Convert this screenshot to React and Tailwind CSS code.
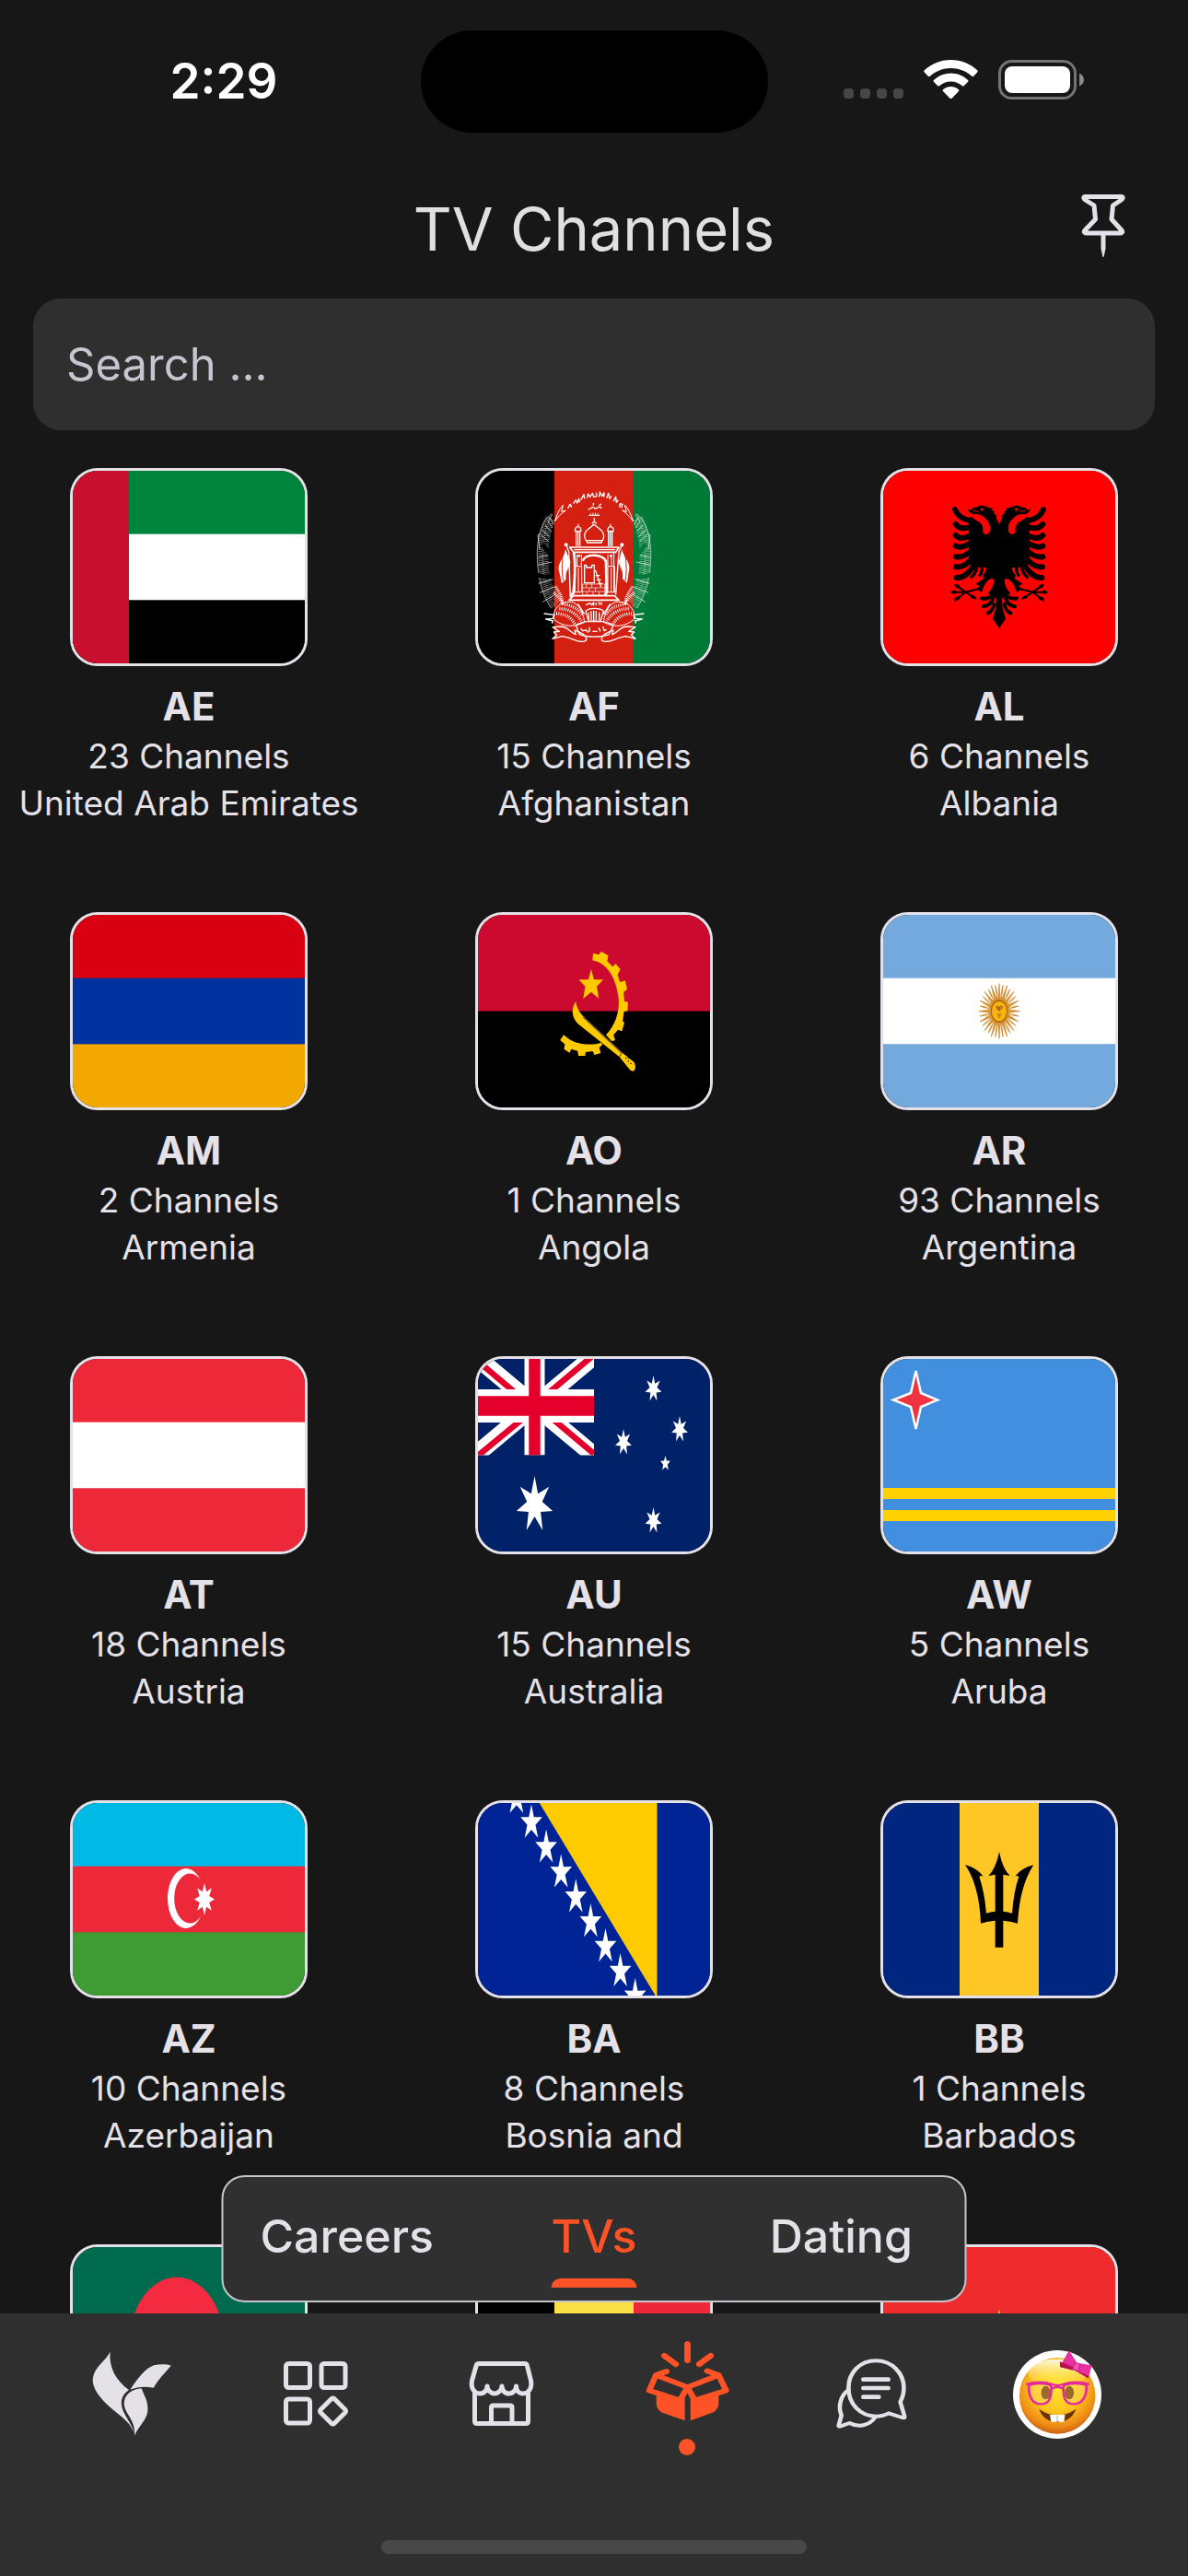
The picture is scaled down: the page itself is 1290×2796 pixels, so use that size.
import React from "react";

function starPoints(cx, cy, outer, inner, n) {
  const pts = [];
  for (let i = 0; i < n * 2; i++) {
    const r = i % 2 ? inner : outer;
    const a = (Math.PI * i) / n - Math.PI / 2;
    pts.push(`${(cx + r * Math.cos(a)).toFixed(2)},${(cy + r * Math.sin(a)).toFixed(2)}`);
  }
  return pts.join(" ");
}

function Stripes({ colors, vertical }) {
  const n = colors.length;
  return colors.map((c, i) =>
    vertical ? (
      <rect key={i} x={(258 / n) * i} y="0" width={258 / n + 0.5} height="215" fill={c} />
    ) : (
      <rect key={i} x="0" y={(215 / n) * i} width="258" height={215 / n + 0.5} fill={c} />
    )
  );
}

function FlagAE() {
  return (
    <>
      <Stripes colors={["#00843d", "#ffffff", "#000000"]} />
      <rect width="64" height="215" fill="#c8102e" />
    </>
  );
}

function WreathSide({ gap }) {
  return (
    <g>
      <path d="M298 203C262 225 248 290 250 345c2 60 12 115 45 165" strokeWidth="3" opacity=".6" />
      <path d="M286 215c-22 40-26 90-24 145 2 50 12 100 42 145" strokeWidth="18" strokeDasharray="2 4" opacity=".6" />
      <path d="M299 222c-22 50-22 90-22 140 2 50 14 90 44 130" strokeWidth="20" strokeDasharray="2 4" opacity=".55" />
      <path d="M300 205l-14 22M290 212l14 26M284 226l16 22M276 240l20 22M268 256l22 22M262 272l24 20M253 345l46-10M252 370l46-10M254 430l48-14M258 460l50-20M268 490l40-24M258 318l-6-46 8-4" strokeWidth="2" />
      <path d="M266 302c12 14 22 26 32 42M250 400c14 10 36 8 52 6" strokeWidth="14" stroke={gap} />
      <path d="M307 228c8-22 14-40 28-54l-6 22 14-4c-14 10-26 20-36 36z" strokeWidth="3" />
      <path d="M310 440c12 20 24 34 22 58M304 460c14 10 26 26 30 40" strokeWidth="9" strokeDasharray="3 3" />
      <path d="M306 520c16-26 30-32 58-30 22 10 34 26 40 66-34 18-70 16-100-10z" strokeWidth="3" />
      <path d="M322 512c24 0 52 10 72 40M312 528c24 0 46 8 62 36M340 498c24 4 44 14 58 36" strokeWidth="10" strokeDasharray="3 4" />
      <path d="M272 528l34 4-6 12-22 2 24 6-4 8" strokeWidth="4" />
      <path d="M300 572l30-2c20 2 28 20 46 26l-4-14c24 10 40 16 38 32-16 16-50-10-80-12l-30 8 14-12-10-10 18-2z" strokeWidth="4" />
    </g>
  );
}

function FlagAF() {
  return (
    <>
      <Stripes vertical colors={["#000000", "#d32011", "#007a36"]} />
      <g transform="translate(-16 -18) scale(.33333)" fill="none" stroke="#fff" strokeLinejoin="round">
        <WreathSide gap="#000000" />
        <g transform="translate(870 0) scale(-1 1)">
          <WreathSide gap="#007a36" />
        </g>
        <path d="M350 186c4-6 2-10 8-14l4 10M368 170l8-12 4 10 6-14 2 12M392 158l10-18 2 14M412 152l4-14 6 10 8-12 4 12 10-2-2-12M452 148l2-16 8 14 6-12 0 14M476 152l6-16 4 18 6-10M498 162l8-14 2 18 6-8M518 182l2-12 8 2-4 12" strokeWidth="4" />
        <path d="M416 188c8 2 14-12 20-4 8 10 14-14 24 2M432 176l2-8M452 176l6-6" strokeWidth="4" />
        <path d="M418 208h36M424 202v8M432 200v10M440 200v10M448 202v8" strokeWidth="3" />
        <path d="M436 216v12M430 236c0-8 12-8 12 0M409 290c-16-28 12-40 26-52 14 12 42 24 28 52zM412 297h48M412 290v8M460 290v8" strokeWidth="4" />
        <path d="M383 236v6M488 236v6M374 260c-4-20 22-20 18 0zM480 260c-4-20 22-20 18 0zM377 262v46M383 262v46M389 262v46M482 262v46M488 262v46M494 262v46" strokeWidth="4" />
        <path d="M356 312h160l-10 16H368z" strokeWidth="5" />
        <path d="M370 320h134" strokeWidth="4" />
        <path d="M371 330v136M500 330v130M380 336v36M394 336v36M480 336v36M492 336v36M373 374h22v84h-22zM480 374h22v84h-22zM384 378v78M491 378v78" strokeWidth="3" />
        <path d="M369 330c6 24 4 100-2 130l-8 12M398 356c10-24 64-24 76 2l2 102-4 8" strokeWidth="8" />
        <path d="M404 428v-58h6v8h18v-8h8v58zM434 392l6-4 18 54M440 404h14M444 418h14M448 430h14" strokeWidth="4" />
        <path d="M398 432h72v36h-72zM398 444h72M398 456h72M410 432v12M428 432v12M420 444v12M440 444v12M412 456v12M432 456v12M452 456v12" strokeWidth="2" />
        <path d="M354 484l14-14h134l14 14z" strokeWidth="5" />
        <path d="M345 306l8 20 5 150M526 306l-10 20-10 140" strokeWidth="4" />
        <g fill="#fff" stroke="none">
          <circle cx="344" cy="304" r="6" />
          <circle cx="526" cy="304" r="6" />
          <path d="M342 318c-2 26-24 40-22 68 6 18 6 30 10 44l14-14c-4-30 14-36 14-56zM526 318c4 26 26 40 24 64-4 20-4 34-8 46l-14-14c4-30-12-36-12-56z" />
          <circle cx="386" cy="340" r="4" />
          <circle cx="490" cy="340" r="4" />
        </g>
        <path d="M333 334c-2 30-4 50 2 88M537 334c2 30 6 50 0 88" stroke="#d32011" strokeWidth="3" />
        <path d="M408 500l14-6 6 6 6-8v10M442 492v10M450 490l4 10M458 490l2 10" strokeWidth="4" />
        <path d="M408 520c10-12 46-12 58 0l-10 34h-38zM418 524v26M426 520v30M434 518v34M442 520v30M452 524v26M404 530l-22-34M466 530l22-34M376 566c26-18 94-18 122 0l-14 30c-24 10-72 10-96 0z" strokeWidth="4" />
        <path d="M392 576l6 8 12-2 6 8M420 572v16M430 586h16M450 574l6 12M464 570l4 14 8-4" strokeWidth="4" />
      </g>
    </>
  );
}

const EAGLE_HALF = (
  <g fill="none" stroke="#000" strokeLinecap="round" strokeLinejoin="round">
    <path
      stroke="none"
      fill="#000"
      d="M436 240L424 214L428 212L416 198L420 196L408 190L416 185L402 184C390 175 372 174 364 181L350 184L342 192L334 185C334 198 346 206 362 204C378 205 386 214 397 225C408 240 408 262 400 267C392 273 382 268 382 260C384 240 376 232 362 226L344 213L336 219L336 360L345 375L398 379L390 400L384 414L358 432L372 437L362 448L378 459C386 430 402 412 414 414C424 420 412 450 398 462L412 470L426 480L424 510L414 545L436 577Z"
    />
    <circle cx="379" cy="189" r="5" fill="#f00" stroke="none" />
    <path stroke="#f00" strokeWidth="3" d="M352 193L368 196" />
    <g strokeWidth="18">
      <path d="M291 189Q302 218 340 225" />
      <path d="M293 237Q308 257 342 246" />
      <path d="M293 273Q308 290 344 274" />
      <path d="M293 308Q314 318 348 294" />
      <path d="M293 343Q320 348 350 318" />
      <path d="M294 376Q326 380 354 338" />
      <path d="M296 411Q328 414 358 362" />
    </g>
    <g strokeWidth="10">
      <path d="M362 370Q362 395 344 409" />
      <path d="M377 370Q382 392 372 403" />
      <path d="M398 378Q398 395 386 405" />
    </g>
    <path strokeWidth="6" d="M368 448L325 458H282M325 458L295 436M325 458L293 484M358 478L325 458" />
    <path stroke="none" fill="#000" d="M276 458l12-7 10 7-10 7zM288 432l16 2 4 12-14-2zM289 490l2-15 14-3 2 8zM362 482l-18-4-4-12 14 4z" />
    <g strokeWidth="12">
      <path d="M378 478Q400 484 420 462" />
      <path d="M384 505Q406 502 414 480" />
      <path d="M398 526Q414 520 418 498" />
    </g>
    <path stroke="#f00" strokeWidth="3" d="M421 510L415 530" />
  </g>
);

function FlagAL() {
  return (
    <>
      <rect width="258" height="215" fill="#ff0000" />
      <g transform="translate(-16 -18) scale(.33333)">
        {EAGLE_HALF}
        <g transform="translate(870 0) scale(-1 1)">{EAGLE_HALF}</g>
      </g>
    </>
  );
}

function FlagAO() {
  return (
    <>
      <Stripes colors={["#cc092f", "#000000"]} />
      <g transform="translate(44 -10) scale(.43367 .33333)" fill="#ffcb00">
        <path d="M192 187L194 164L208 169L214 158L232 172L229 190L243 208L250 198L262 216L255 234L261 258L274 253L279 281L270 291L272 320L281 323L280 352L271 354L268 385L272 390L266 418L256 413L245 430L249 448L240 450L226 430C248 400 259 360 258 318C254 250 230 195 192 187Z" />
        <path d="M120 430L131 441C155 465 195 464 214 455L217 462L209 471L213 489L197 495L193 483L175 486L174 498L157 498L155 482L139 476L135 488L121 476L123 460L111 447Z" />
        <path d="M150 322C154 350 165 366 180 383L267 488L296 518C302 530 300 545 294 548L287 545L260 502L158 396C140 376 138 345 150 322Z" />
        <polygon points="189,216 196,250 219,250 203,272 208,311 189,290 169,312 174,272 158,250 182,250" />
        <path d="M168 372L266 490M264 490L260 502" stroke="#000" strokeWidth="1.8" fill="none" />
        <g fill="#000">
          <circle cx="276" cy="506" r="2" />
          <circle cx="282" cy="515" r="2" />
          <circle cx="288" cy="523" r="2" />
          <circle cx="283" cy="506" r="1.5" />
        </g>
      </g>
    </>
  );
}

function FlagAR() {
  const rays = Array.from({ length: 32 }, (_, i) => i);
  return (
    <>
      <Stripes colors={["#74a9dd", "#ffffff", "#74a9dd"]} />
      <g transform="translate(129 107.5) scale(.75 1)">
        {rays.map((i) => (
          <path
            key={i}
            d={i % 2 ? "M-1.8-10Q2-20 0-28.5Q-2-20 1.8-10" : "M-2-10L0-30L2-10Z"}
            transform={`rotate(${i * 11.25})`}
            fill="#e0952a"
            stroke="#c8862f"
            strokeWidth=".7"
          />
        ))}
        <circle r="11.5" fill="#f6b40e" stroke="#a5601a" strokeWidth="1.4" />
        <path d="M-5-4q2.500-2 4.500 0l-.5 4M5-4q-2.500-2-4.500 0l.5 4M-2.500 4h5M-4-2.500h2.500M1.500-2.500h2.500M-1 6.500h2" stroke="#a5601a" strokeWidth="1.300" fill="none" />
      </g>
    </>
  );
}

function FlagAU() {
  return (
    <>
      <rect width="258" height="215" fill="#012169" />
      <svg width="129" height="107.5" viewBox="0 0 129 107.500" preserveAspectRatio="none">
        <path d="M0 0L129 107.500M129 0L0 107.500" stroke="#fff" strokeWidth="19" />
        <path d="M0 2L64 56M129 105L65 51M126 0L70 47M3 107L60 60" stroke="#e4002b" strokeWidth="6.500" transform="translate(0 1)" />
        <path d="M64.500 0V107.500" stroke="#fff" strokeWidth="22" />
        <path d="M0 54H129" stroke="#fff" strokeWidth="36" />
        <path d="M64.500 0V107.500" stroke="#e4002b" strokeWidth="12.500" />
        <path d="M0 54H129" stroke="#e4002b" strokeWidth="21.500" />
      </svg>
      <g fill="#fff">
        <g transform="translate(64.500 161) scale(.65 1)">
          <polygon points={starPoints(0, 0, 31, 13, 7)} />
        </g>
        <g transform="translate(193.500 35.500) scale(.63 1)">
          <polygon points={starPoints(0, 0, 14.5, 6.5, 7)} />
        </g>
        <g transform="translate(222 79.500) scale(.63 1)">
          <polygon points={starPoints(0, 0, 14.5, 6.5, 7)} />
        </g>
        <g transform="translate(161 93.500) scale(.63 1)">
          <polygon points={starPoints(0, 0, 14.5, 6.5, 7)} />
        </g>
        <g transform="translate(193.500 178.500) scale(.63 1)">
          <polygon points={starPoints(0, 0, 14.5, 6.5, 7)} />
        </g>
        <g transform="translate(206.500 116.500) scale(.66 1)">
          <polygon points={starPoints(0, 0, 8.5, 3.7, 5)} />
        </g>
      </g>
    </>
  );
}

function FlagAW() {
  return (
    <>
      <rect width="258" height="215" fill="#418fde" />
      <rect y="143" width="258" height="12" fill="#ffd100" />
      <rect y="167" width="258" height="12" fill="#ffd100" />
      <polygon
        points="38.500,16 44,40 62,47.500 44,55 38.500,79 33,55 14,47.500 33,40"
        fill="#ef3340"
        stroke="#fff"
        strokeWidth="2.500"
      />
    </>
  );
}

function FlagAZ() {
  return (
    <>
      <Stripes colors={["#00b9e4", "#ed2939", "#3f9c35"]} />
      <g fill="#fff">
        <path d="M142 87A20 32.500 0 1 0 142 126A17 27 0 1 1 142 87Z" />
        <g transform="translate(146 107.500) scale(.63 1)">
          <polygon points={starPoints(0, 0, 17.5, 9, 8)} />
        </g>
      </g>
    </>
  );
}

function FlagBA() {
  const stars = [-1, 0, 1, 2, 3, 4, 5, 6, 7];
  return (
    <>
      <rect width="258" height="215" fill="#002395" />
      <path d="M68 0H197.500V215Z" fill="#fecb00" />
      {stars.map((i) => (
        <g key={i} transform={`translate(${61 + i * 16.1} ${24.500 + i * 26.9}) scale(.62 1)`}>
          <polygon points={starPoints(0, 0, 20, 7.6, 5)} fill="#fff" />
        </g>
      ))}
    </>
  );
}

function FlagBB() {
  return (
    <>
      <Stripes vertical colors={["#00267f", "#ffc726", "#00267f"]} />
      <g transform="translate(-16 -14) scale(.33333)">
        <path d="M435 209C441 240 452 270 470 288L448 284V404Q464 406 477 410Q482 340 499 291Q493 286 487 290Q508 262 547 253Q502 320 495 443Q472 436 448 434V521H422V434Q398 436 375 443Q370 320 324 252Q362 262 383 290Q376 286 370 291Q387 340 393 410Q406 406 422 404V284L400 288C418 270 429 240 435 209Z" />
      </g>
    </>
  );
}

function FlagBD() {
  return (
    <>
      <rect width="258" height="215" fill="#006a4e" />
      <ellipse cx="116" cy="107.500" rx="51.600" ry="71.700" fill="#f42a41" />
    </>
  );
}

function FlagBE() {
  return <Stripes vertical colors={["#000000", "#fae042", "#ed2939"]} />;
}

function FlagBF() {
  return (
    <>
      <Stripes colors={["#ef2b2d", "#009e49"]} />
      <g transform="translate(129 107.500) scale(.75 1)">
        <polygon points={starPoints(0, 0, 37, 14, 5)} fill="#fcd116" />
      </g>
    </>
  );
}

const COUNTRIES = [
  { code: "AE", count: "23 Channels", name: "United Arab Emirates", Flag: FlagAE },
  { code: "AF", count: "15 Channels", name: "Afghanistan", Flag: FlagAF },
  { code: "AL", count: "6 Channels", name: "Albania", Flag: FlagAL },
  { code: "AM", count: "2 Channels", name: "Armenia", Flag: () => <Stripes colors={["#d90012", "#0033a0", "#f2a800"]} /> },
  { code: "AO", count: "1 Channels", name: "Angola", Flag: FlagAO },
  { code: "AR", count: "93 Channels", name: "Argentina", Flag: FlagAR },
  { code: "AT", count: "18 Channels", name: "Austria", Flag: () => <Stripes colors={["#ed2939", "#ffffff", "#ed2939"]} /> },
  { code: "AU", count: "15 Channels", name: "Australia", Flag: FlagAU },
  { code: "AW", count: "5 Channels", name: "Aruba", Flag: FlagAW },
  { code: "AZ", count: "10 Channels", name: "Azerbaijan", Flag: FlagAZ },
  { code: "BA", count: "8 Channels", name: "Bosnia and", Flag: FlagBA },
  { code: "BB", count: "1 Channels", name: "Barbados", Flag: FlagBB },
  { code: "BD", Flag: FlagBD },
  { code: "BE", Flag: FlagBE },
  { code: "BF", Flag: FlagBF },
];

function CountryCard({ code, count, name, Flag }) {
  return (
    <li>
      <a href={`#${code}`} aria-label={code} className="flex flex-col items-center text-center text-[#e4e1e9]">
        <div className="h-[215px] w-[258px] overflow-hidden rounded-[30px] border-3 border-[#e4e1e9]">
          <svg viewBox="3 3 252 209" className="block h-full w-full" aria-hidden="true">
            <Flag />
          </svg>
        </div>
        {name && (
          <>
            <strong className="mt-4 text-[42px] leading-14 font-bold">{code}</strong>
            <span className="text-[37px] leading-[51px]">{count}</span>
            <span className="text-[37px] leading-[51px] whitespace-nowrap">{name}</span>
          </>
        )}
      </a>
    </li>
  );
}

function StatusBar() {
  return (
    <div className="grid h-[177px] shrink-0 grid-cols-3 text-white">
      <div className="pt-[54px] pl-14 text-center text-[53px] leading-[68px] font-semibold">2:29</div>
      <div className="flex justify-center pt-[33px]">
        <div className="h-[111px] w-[377px] rounded-full bg-black" />
      </div>
      <div className="flex items-start justify-end gap-[22px] pt-[65px] pr-[112px]">
        <div className="flex gap-[7px] pt-[31px]">
          {[0, 1, 2, 3].map((i) => (
            <span key={i} className="h-[11px] w-[11px] rounded-[4px] bg-[#464646]" />
          ))}
        </div>
        <svg width="59" height="43" viewBox="0 0 59 43" fill="#fff" aria-hidden="true">
          <path d="M29.500 0C41 0 51 4.500 58 11c1 1 1 1.600.2 2.400l-3.800 4c-.8.8-1.600.8-2.400 0C45.500 12 38 9 29.500 9S13.500 12 7 17.400c-.8.8-1.600.8-2.400 0l-3.800-4C0 12.600 0 12 1 11 8 4.500 18 0 29.500 0z" />
          <path d="M29.500 14.500c7.300 0 13.700 2.800 18.300 7.200.9.800.9 1.500.1 2.300l-4 4c-.8.8-1.400.7-2.200 0-3.200-2.800-7.400-4.600-12.200-4.600s-9 1.800-12.200 4.600c-.8.7-1.400.8-2.200 0l-4-4c-.8-.8-.8-1.500.1-2.300 4.600-4.400 11-7.200 18.300-7.200z" />
          <path d="M29.500 29c3.200 0 6 1.100 8.200 3 .9.800.9 1.500.1 2.300l-7 7.200c-.8.800-1.800.8-2.600 0l-7-7.200c-.8-.8-.8-1.500.1-2.300 2.200-1.900 5-3 8.200-3z" />
        </svg>
        <svg width="94" height="44" viewBox="0 0 94 44" aria-hidden="true">
          <rect x="1.500" y="1.500" width="82" height="40" rx="13" fill="none" stroke="#747474" strokeWidth="3" />
          <rect x="7" y="7" width="71" height="29" rx="8" fill="#fff" />
          <path d="M88 14.500c3 1.200 5 4 5 7s-2 5.800-5 7z" fill="#8a8a8a" />
        </svg>
      </div>
    </div>
  );
}

function PinIcon() {
  return (
    <svg width="48" height="70" viewBox="0 0 48 70" fill="none" stroke="#e4e1e9" strokeWidth="5" strokeLinejoin="round" aria-hidden="true">
      <path d="M4 3.500H44C46 4 45 6 43.500 7L34.500 13L33 28L44 40C45.500 42 44 43 42.500 43H5.500C4 43 2.500 42 4 40L15.500 28L14 13L4.500 7C3 6 2 4 4 3.500Z" />
      <path d="M21.500 44H26.500V60L24.500 69H23.500L21.500 60Z" fill="#e4e1e9" stroke="none" />
    </svg>
  );
}

function LogoIcon() {
  return (
    <g transform="translate(-33 -39) scale(.35714 .33333)" fill="#e4e1e9">
      <path d="M167 128C162 180 186 222 224 252C196 272 196 302 212 332C224 356 236 372 238 390C226 350 186 330 152 294C124 262 108 232 116 206C122 176 152 158 167 128Z" />
      <path d="M228 251C248 220 272 182 300 172C318 167 340 168 352 173C334 196 314 216 299 245C272 240 250 242 228 251Z" />
      <path d="M262 247C270 270 284 290 281 322C278 350 250 376 241 401C244 356 222 340 212 312C204 288 214 252 262 247Z" />
    </g>
  );
}

function GridIcon() {
  return (
    <g fill="none" stroke="#e4e1e9" strokeWidth="5" strokeLinejoin="round">
      <rect x="16.500" y="16.500" width="26" height="26" rx="3" />
      <rect x="55" y="16.500" width="26" height="26" rx="3" />
      <rect x="16.500" y="55" width="26" height="26" rx="3" />
      <rect x="57" y="57.500" width="21" height="21" rx="2" transform="rotate(45 67.500 68)" />
    </g>
  );
}

function StoreIcon() {
  return (
    <g fill="none" stroke="#e4e1e9" strokeWidth="5" strokeLinecap="round" strokeLinejoin="round">
      <path d="M25 16.500H75Q77 16.500 77.500 19L81.500 35C83 43 79 49 73 49C68 49 65.500 45 65.500 41C65.500 45 62 49 57.500 49S50 45 50 41C50 45 46 49 42 49S34 45 34 41C34 45 31 49 26 49C20 49 16 43 17.500 35L22 19Q22.500 16.500 25 16.500Z" />
      <path d="M20.500 48V79Q20.500 81.500 23 81.500H76Q78.500 81.500 78.500 79V48" />
      <path d="M38.500 81V64Q38.500 62 40.500 62H59Q61 62 61 64V81" />
    </g>
  );
}

function BoxIcon() {
  return (
    <g transform="translate(-35 -39) scale(.38265 .33333)" fill="none" stroke="#ff5226" strokeLinecap="round" strokeLinejoin="round">
      <path strokeWidth="18" d="M223.500 103V156M158 141L190 168M289 141L257 168" />
      <path strokeWidth="17" d="M164 192L134 204L115 254L202 286L223.500 243L134 204M279 190L312 204L333 254L244 286L223.500 243L312 204" />
      <path fill="#ff5226" stroke="none" d="M135 264L202 288L216 262V352L156 328Q135 318 135 296ZM312 264L246 288L232 262V352L290 328Q312 318 312 296Z" />
    </g>
  );
}

function ChatIcon() {
  return (
    <g transform="translate(-237 -39) scale(.38265 .33333)" fill="none" stroke="#e4e1e9" strokeWidth="12" strokeLinecap="round" strokeLinejoin="round">
      <path d="M761 157C807 157 840 198 840 246C840 264 836 278 830 291L842 338Q843 345 835 342L797 328C786 335 774 338 761 338C715 338 683 296 683 246S715 157 761 157Z" />
      <path d="M683 252C662 268 652 305 663 335L655 368Q655 373 661 370L686 360C712 376 742 368 758 342" />
      <path strokeWidth="14" d="M726 218H795M726 246H795M726 275H768" />
    </g>
  );
}

function AvatarIcon() {
  return (
    <>
      <defs>
        <radialGradient id="face" cx=".5" cy=".38" r=".66">
          <stop offset="0" stopColor="#ffe92f" />
          <stop offset=".5" stopColor="#fcc41f" />
          <stop offset=".8" stopColor="#ee8a15" />
          <stop offset="1" stopColor="#b9500f" />
        </radialGradient>
        <linearGradient id="shine" x1="0" y1="0" x2="0" y2="1">
          <stop offset="0" stopColor="#fff" stopOpacity=".9" />
          <stop offset="1" stopColor="#ffee55" stopOpacity="0" />
        </linearGradient>
      </defs>
      <circle cx="50" cy="50" r="48" fill="#fff" />
      <g transform="translate(-437 -39) scale(.38265 .33333)">
        <ellipse cx="1273" cy="271" rx="108" ry="124" fill="url(#face)" />
        <ellipse cx="1273" cy="196" rx="84" ry="44" fill="url(#shine)" />
        <ellipse cx="1240" cy="261" rx="13" ry="22" fill="#8a4f0a" />
        <ellipse cx="1307" cy="261" rx="13" ry="22" fill="#8a4f0a" />
        <path d="M1192 240C1192 228 1256 228 1256 242C1256 280 1250 298 1226 298C1200 298 1192 270 1192 240ZM1290 242C1290 228 1356 228 1356 240C1356 270 1346 298 1320 298C1296 298 1290 280 1290 242Z" fill="#fff" fillOpacity=".15" stroke="#e32a9c" strokeWidth="7" />
        <path d="M1184 234Q1222 220 1260 234Q1273 240 1288 234Q1326 220 1364 234M1256 248Q1273 238 1290 248" fill="none" stroke="#e32a9c" strokeWidth="7" />
        <path d="M1221 314Q1273 356 1326 314Q1312 356 1273 356Q1234 356 1221 314Z" fill="#6b330a" />
        <path d="M1252 333H1295L1292 355Q1283 359 1274 354Q1264 359 1255 355Z" fill="#fff" />
        <path d="M1273 335V356" stroke="#bbb" strokeWidth="3" />
        <path d="M1306 124L1329 164L1371 172L1361 214L1318 186L1280 176Z" fill="#e8309f" />
        <path d="M1280 160L1322 180L1318 188L1281 178ZM1320 186L1362 206L1360 214Z" fill="#b8104f" />
        <path d="M1322 164L1338 168L1332 192L1316 184Z" fill="#f552b8" stroke="#b5176f" strokeWidth="2" />
      </g>
    </>
  );
}

const NAV = [
  { label: "Home", Icon: LogoIcon },
  { label: "Apps", Icon: GridIcon },
  { label: "Store", Icon: StoreIcon },
  { label: "Explore", Icon: BoxIcon, active: true },
  { label: "Chats", Icon: ChatIcon },
  { label: "Profile", Icon: AvatarIcon },
];

const TABS = [{ label: "Careers" }, { label: "TVs", active: true }, { label: "Dating" }];

function BottomBar() {
  return (
    <footer className="relative shrink-0 bg-[#2f2f2f]">
      <div className="absolute bottom-full left-1/2 mb-3 grid h-[138px] w-[809px] -translate-x-1/2 grid-cols-3 rounded-[25px] border-2 border-[#c8c5cc] bg-[#303030]">
        {TABS.map(({ label, active }) => (
          <button
            key={label}
            type="button"
            className={
              active
                ? "flex flex-col items-center pt-8 text-[50px] leading-16 font-medium text-[#ff5226]"
                : "flex flex-col items-center pt-8 text-[50px] leading-16 font-medium text-[#e4e1e9]"
            }
          >
            {label}
            {active && <span className="mt-3.5 h-[10px] w-[93px] rounded-t-[10px] bg-[#ff5226]" />}
          </button>
        ))}
      </div>
      <nav className="grid grid-cols-6 px-[42px] pt-[38px]">
        {NAV.map(({ label, Icon, active }) => (
          <button key={label} type="button" aria-label={label} className="flex h-[118px] flex-col items-center">
            <svg width="100" height="100" viewBox="0 0 100 100" className="shrink-0 overflow-visible" aria-hidden="true">
              <Icon />
            </svg>
            {active && <span className="-mt-0.5 h-[18px] w-[18px] shrink-0 rounded-full bg-[#ff5226]" />}
          </button>
        ))}
      </nav>
      <div className="flex justify-center pt-[90px] pb-6">
        <div className="h-[15px] w-[462px] rounded-full bg-[#484848]" />
      </div>
    </footer>
  );
}

export default function App() {
  return (
    <div className="flex h-screen flex-col overflow-hidden bg-[#171717] font-['Inter',sans-serif]">
      <StatusBar />
      <header className="grid h-[147px] shrink-0 grid-cols-[1fr_auto_1fr] items-center px-[68px]">
        <span />
        <h1 className="pb-1 text-[65px] leading-20 text-[#e0e0e0]">TV Channels</h1>
        <button type="button" aria-label="Pin" className="justify-self-end pb-3">
          <PinIcon />
        </button>
      </header>
      <div className="shrink-0 px-9">
        <input
          type="search"
          aria-label="Search"
          placeholder="Search ..."
          className="block h-[143px] w-full rounded-[30px] bg-[#2f2f2f] px-9 text-[49px] text-[#e4e1e9] outline-none placeholder:text-[#c8c5d0]"
        />
      </div>
      <main className="min-h-0 flex-1 overflow-hidden pt-[41px]">
        <ul className="grid grid-cols-3 gap-x-[30px] gap-y-[93px]">
          {COUNTRIES.map((c) => (
            <CountryCard key={c.code} {...c} />
          ))}
        </ul>
      </main>
      <BottomBar />
    </div>
  );
}
